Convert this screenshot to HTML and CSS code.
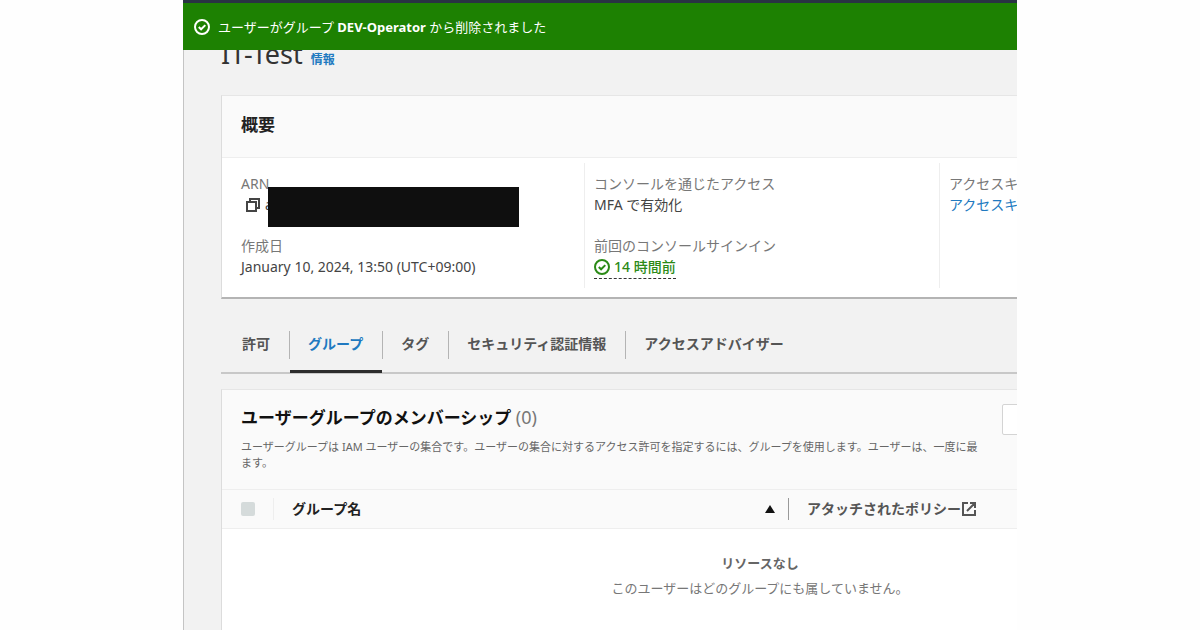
FILE: index.html
```html
<!DOCTYPE html>
<html lang="ja">
<head>
<meta charset="utf-8">
<title>IT-Test</title>
<link rel="stylesheet" href="styles.css">
</head>
<body>
<div class="frame">
  <div class="flash" role="status">
    <svg class="icon" viewBox="0 0 16 16" aria-hidden="true"><circle cx="8" cy="8" r="7"/><path d="M4.8 8l2.3 2.3 4.2-4.2"/></svg>
    <span>ユーザーがグループ <strong>DEV-Operator</strong> から削除されました</span>
  </div>
  <main class="content">
    <header class="title">
      <h1>IT-Test</h1>
      <a class="info" href="#">情報</a>
    </header>

    <section class="panel summary">
      <h2 class="summary-head">概要</h2>
      <div class="columns">
        <dl class="column">
          <dt>ARN</dt>
          <dd class="arn">
            <button class="copy" type="button" aria-label="コピー"><svg class="icon" viewBox="0 0 16 16" aria-hidden="true"><path d="M2 5h9v9H2zM5 5V2h9v9h-3"/></svg></button>
            <span>a</span>
            <span class="mask"></span>
          </dd>
          <dt>作成日</dt>
          <dd>January 10, 2024, 13:50 (UTC+09:00)</dd>
        </dl>
        <dl class="column">
          <dt>コンソールを通じたアクセス</dt>
          <dd>MFA で有効化</dd>
          <dt>前回のコンソールサインイン</dt>
          <dd><span class="signin"><svg class="icon" viewBox="0 0 16 16" aria-hidden="true"><circle cx="8" cy="8" r="7"/><path d="M4.8 8l2.3 2.3 4.2-4.2"/></svg>14 時間前</span></dd>
        </dl>
        <dl class="column">
          <dt>アクセスキ</dt>
          <dd><a href="#">アクセスキ</a></dd>
        </dl>
      </div>
    </section>

    <nav class="tabs">
      <button class="tab" type="button">許可</button>
      <button class="tab active" type="button">グループ</button>
      <button class="tab" type="button">タグ</button>
      <button class="tab" type="button">セキュリティ認証情報</button>
      <button class="tab" type="button">アクセスアドバイザー</button>
    </nav>

    <section class="panel groups">
      <div class="groups-head">
        <div class="groups-title">
          <h2>ユーザーグループのメンバーシップ <span class="count">(0)</span></h2>
          <button class="action" type="button" aria-label="更新"></button>
        </div>
        <p>ユーザーグループは IAM ユーザーの集合です。ユーザーの集合に対するアクセス許可を指定するには、グループを使用します。ユーザーは、一度に最<br>ます。</p>
      </div>
      <table>
        <thead>
          <tr>
            <th class="pick"><input type="checkbox" disabled aria-label="すべて選択"></th>
            <th class="name"><div class="cell"><span>グループ名</span><svg class="sort" viewBox="0 0 10 8" aria-hidden="true"><path d="M5 0l5 8H0z"/></svg></div></th>
            <th class="policy"><div class="cell"><span>アタッチされたポリシー</span><svg class="icon" viewBox="0 0 16 16" aria-hidden="true"><path d="M7 2H2v12h12V9M9 2h5v5M14 2L6 10"/></svg></div></th>
          </tr>
        </thead>
        <tbody>
          <tr><td colspan="3"><strong>リソースなし</strong><span>このユーザーはどのグループにも属していません。</span></td></tr>
        </tbody>
      </table>
    </section>
  </main>
</div>
</body>
</html>
```
FILE: styles.css
```css
* { box-sizing: border-box; }

body {
  margin: 0;
  padding: 0 183px;
  background: #fefefe;
  color: #444;
  font: 14px/22px "Noto Sans", "Noto Sans CJK JP", sans-serif;
}

h1, h2, p, dl, dd { margin: 0; }
a { color: #2079c0; text-decoration: none; }
button { font: inherit; cursor: pointer; }

.icon {
  flex: none;
  width: 16px;
  height: 16px;
  fill: none;
  stroke: currentColor;
  stroke-width: 2;
}

.frame {
  height: 100vh;
  display: flex;
  flex-direction: column;
  overflow: hidden;
  background: #f2f2f2;
  border-top: 3px solid #293343;
}

.flash {
  position: relative;
  z-index: 1;
  flex: none;
  display: flex;
  align-items: center;
  gap: 8px;
  padding: 13px 11px 12px;
  background: #1d8102;
  color: #fff;
  font-size: 13px;
}

.content {
  flex: 1;
  display: flex;
  flex-direction: column;
  min-height: 0;
  padding-left: 37px;
  border-left: 1px solid #c4c4c4;
}

.title {
  display: flex;
  align-items: baseline;
  gap: 8px;
  margin: -14px 0 23px;
}

.title h1 {
  color: #333;
  font-size: 27px;
  font-weight: 400;
  line-height: 36px;
}

.info { font-size: 12px; font-weight: 700; }

.panel {
  flex: none;
  width: 1078px;
  background: #fff;
  border: 1px solid #e6e6e6;
  border-left-color: #dcdcdc;
}

.summary { border-bottom: 2px solid #b4b4b4; }

.summary-head {
  padding: 16px 19px 19px;
  background: #fafafa;
  border-bottom: 1px solid #eee;
  color: #222;
  font-size: 17px;
  line-height: 26px;
}

.columns {
  display: grid;
  grid-template-columns: 362px 355px 1fr;
  padding: 5px 0 9px;
}

.column {
  padding: 10px 9px;
  border-left: 1px solid #eee;
}

.column:first-child { padding-left: 19px; border-left: 0; }
dt { color: #777; line-height: 21px; }
dd + dt { margin-top: 19px; }
.column dd { height: 22px; }

.arn { position: relative; display: flex; align-items: center; gap: 4px; }

.copy {
  display: flex;
  padding: 0 0 0 4px;
  border: 0;
  background: none;
  color: #444;
}

.mask {
  position: absolute;
  left: 27px;
  top: -7px;
  width: 251px;
  height: 40px;
  background: #0f0f0f;
}

.signin {
  display: inline-flex;
  align-items: center;
  gap: 4px;
  border-bottom: 1px dashed #333;
  color: #2b8a16;
  font-weight: 500;
}

.tabs {
  flex: none;
  display: flex;
  width: 1078px;
  margin: 30px 0 15px;
  padding-left: 2px;
  border-bottom: 2px solid #c8c8c8;
}

.tab {
  position: relative;
  padding: 3px 19px 16px;
  border: 0;
  background: none;
  color: #555;
  font-weight: 700;
  line-height: 24px;
}

.tab + .tab::before {
  content: "";
  position: absolute;
  left: 0;
  top: 2px;
  width: 1px;
  height: 28px;
  background: #b4b4b4;
}

.tab.active { color: #2079c0; }

.tab.active::after {
  content: "";
  position: absolute;
  left: 1px;
  right: 0;
  bottom: -1px;
  height: 3px;
  background: #2c2c2c;
}

.groups { flex: 1; border-bottom: 0; }

.groups-head {
  padding: 14px 19px 18px;
  background: #fafafa;
}

.groups-title {
  display: grid;
  grid-template-columns: 761px 1fr;
  height: 35px;
}

.groups-title h2 { color: #111; font-size: 17px; line-height: 27px; }
.count { color: #777; font-size: 18px; font-weight: 400; }

.action {
  height: 31px;
  border: 1px solid #d4d4d4;
  border-radius: 2px;
  background: #fff;
}

.groups-head p {
  color: #666;
  font-size: 11px;
  line-height: 16px;
  white-space: nowrap;
}

table { width: 100%; border-collapse: collapse; table-layout: fixed; }
thead { background: #fafafa; border: solid #eee; border-width: 1px 0; }
th { height: 39px; padding: 0; color: #222; text-align: left; }
.pick { width: 51px; padding-left: 19px; }
.name { width: 515px; }
.cell { display: flex; align-items: center; gap: 0; padding-left: 18px; }
.name .cell { justify-content: space-between; padding-right: 13px; border-left: 1px solid #eee; }
.policy .cell { border-left: 1px solid #999; color: #555; }

.sort { width: 10px; height: 8px; fill: #111; }

input {
  display: block;
  appearance: none;
  width: 14px;
  height: 14px;
  margin: 0;
  border-radius: 2px;
  background: #d5dbdb;
}

td { padding: 22px 0; color: #777; text-align: center; font-size: 13px; line-height: 25px; }
td strong, td span { display: block; }
td strong { color: #666; }
```
